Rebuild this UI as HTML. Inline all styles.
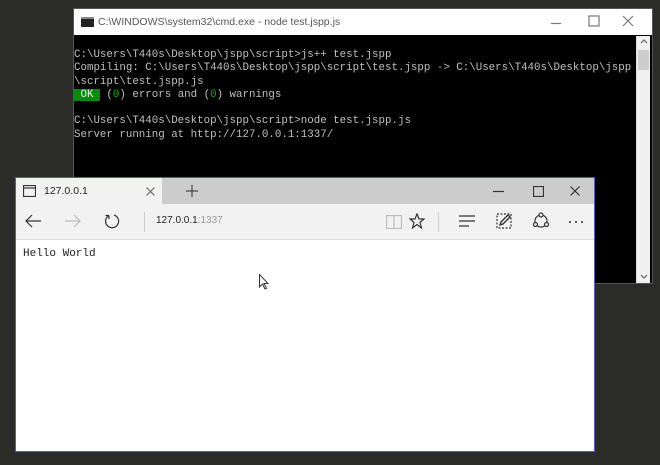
<!DOCTYPE html>
<html><head><style>
*{margin:0;padding:0;box-sizing:border-box}
body{width:660px;height:465px;background:#2b2b27;position:relative;overflow:hidden;font-family:"Liberation Sans",sans-serif}
.cmd{position:absolute;left:73px;top:8px;width:580px;height:276px;background:#000;border:1px solid #555}
.cmd .tb{height:26px;background:#fff;position:relative;font-size:10.5px;color:#555}
.cmd .tb .t{position:absolute;left:24px;top:7px}
.cmd .ic{position:absolute;left:7px;top:8px;width:13px;height:10px;background:#222;border-top:2px solid #888}
.con{position:absolute;left:0;top:40px;font-family:"Liberation Mono",monospace;font-size:10.8px;line-height:13.3px;color:#c0c0c0;white-space:pre}
.ok{background:#0a8a0a;color:#eee}
.g{color:#0b0}
.sb{position:absolute;right:2px;top:27px;width:14px;height:247px;background:#f0f0f0;border-left:1px solid #ddd}
.br{position:absolute;left:15px;top:177px;width:580px;height:275px;background:#fff;border:1px solid #5b5bb5}
.tabs{height:26px;background:#cccccc;position:relative}
.tab{position:absolute;left:0;top:0;width:146px;height:26px;background:#f2f2f2;font-size:10.5px;color:#222}
.tool{height:36px;background:#f2f2f2;border-bottom:1px solid #ddd;position:relative}
svg{position:absolute;fill:none;stroke:#333;stroke-width:1.2}
.hw{position:absolute;left:7px;top:70px;font-family:"Liberation Mono","Courier New",monospace;font-size:11px;color:#222}
</style></head><body>
<div class="cmd">
 <div class="tb"><div class="ic"></div><span class="t">C:\WINDOWS\system32\cmd.exe - node  test.jspp.js</span>
 <svg style="left:476px;top:8px" width="12" height="12" viewBox="0 0 12 12"><path d="M1 6.5H11" stroke="#777"/></svg>
 <svg style="left:514px;top:6px" width="12" height="12" viewBox="0 0 12 12"><rect x="1" y="1" width="10" height="10" stroke="#777"/></svg>
 <svg style="left:548px;top:6px" width="12" height="12" viewBox="0 0 12 12"><path d="M1 1L11 11M11 1L1 11" stroke="#777"/></svg></div>
 <div class="sb"><svg style="left:3px;top:2px" width="8" height="6" viewBox="0 0 8 6"><path d="M1 5L4 2L7 5" stroke="#666"/></svg><div style="position:absolute;top:14px;left:1px;width:11px;height:20px;background:#cdcdcd"></div><svg style="left:3px;bottom:3px" width="8" height="6" viewBox="0 0 8 6"><path d="M1 1L4 4L7 1" stroke="#666"/></svg></div>
<div class="con">C:\Users\T440s\Desktop\jspp\script&gt;js++ test.jspp
Compiling: C:\Users\T440s\Desktop\jspp\script\test.jspp -&gt; C:\Users\T440s\Desktop\jspp
\script\test.jspp.js
<span class="ok"> OK </span> (<span class="g">0</span>) errors and (<span class="g">0</span>) warnings

C:\Users\T440s\Desktop\jspp\script&gt;node test.jspp.js
Server running at http://127.0.0.1:1337/</div>
</div>
<div class="br">
 <div class="tabs">
  <div class="tab">
   <svg style="left:7px;top:7px" width="13" height="12" viewBox="0 0 13 12"><rect x="0.5" y="0.5" width="12" height="11"/><path d="M0.5 3H12.5"/></svg>
   <span style="position:absolute;left:28px;top:7px">127.0.0.1</span>
   <svg style="left:130px;top:9px" width="9" height="9" viewBox="0 0 9 9"><path d="M0.5 0.5L8.5 8.5M8.5 0.5L0.5 8.5" stroke="#666"/></svg></div>
  <svg style="left:170px;top:7px" width="12" height="12" viewBox="0 0 12 12"><path d="M6 0V12M0 6H12" stroke="#444"/></svg>
  <svg style="left:477px;top:7px" width="11" height="12" viewBox="0 0 11 12"><path d="M0 6.5H11"/></svg>
  <svg style="left:517px;top:8px" width="11" height="11" viewBox="0 0 11 11"><rect x="0.5" y="0.5" width="10" height="10"/></svg>
  <svg style="left:554px;top:8px" width="10" height="10" viewBox="0 0 10 10"><path d="M0.5 0.5L9.5 9.5M9.5 0.5L0.5 9.5"/></svg>
 </div>
 <div class="tool">
  <svg style="left:9px;top:10px" width="17" height="14" viewBox="0 0 17 14"><path d="M16 7H1M7 1L1 7L7 13"/></svg>
  <svg style="left:48px;top:10px" width="17" height="14" viewBox="0 0 17 14"><path d="M1 7H16M10 1L16 7L10 13" stroke="#bbb"/></svg>
  <svg style="left:88px;top:9px" width="16" height="16" viewBox="0 0 16 16"><path d="M5 2.5A6.5 6.5 0 1 0 10 2M5 2.5L5 6M5 2.5L1.5 2.5"/></svg>
  <span style="position:absolute;left:128px;top:8px;width:1px;height:20px;background:#ccc"></span>
  <span style="position:absolute;left:140px;top:11px;font-size:10px;color:#222">127.0.0.1<span style="color:#999">:1337</span></span>
  <svg style="left:370px;top:11px" width="16" height="14" viewBox="0 0 16 14"><rect x="0.5" y="0.5" width="15" height="13" stroke="#bbb"/><path d="M8 0.5V13.5" stroke="#bbb"/></svg>
  <svg style="left:393px;top:9px" width="16" height="16" viewBox="0 0 16 16"><path d="M8 1L10 6H15L11 9.5L12.5 15L8 11.5L3.5 15L5 9.5L1 6H6Z"/></svg>
  <span style="position:absolute;left:422px;top:8px;width:1px;height:20px;background:#ccc"></span>
  <svg style="left:443px;top:11px" width="16" height="12" viewBox="0 0 16 12"><path d="M0 1H16M0 6H16M0 11H10"/></svg>
  <svg style="left:480px;top:9px" width="16" height="16" viewBox="0 0 16 16"><rect x="1" y="1" width="14" height="14" stroke-dasharray="2 1.5"/><path d="M4 12L5 9L12 2L14 4L7 11Z" stroke-width="1.4"/></svg>
  <svg style="left:516px;top:8px" width="18" height="18" viewBox="0 0 18 18"><circle cx="9" cy="9" r="6"/><circle cx="9" cy="3" r="2" fill="#f2f2f2"/><circle cx="3.5" cy="12.5" r="2" fill="#f2f2f2"/><circle cx="14.5" cy="12.5" r="2" fill="#f2f2f2"/></svg>
  <svg style="left:552px;top:16px" width="16" height="4" viewBox="0 0 16 4"><circle cx="2" cy="2" r="1" fill="#333" stroke="none"/><circle cx="8" cy="2" r="1" fill="#333" stroke="none"/><circle cx="14" cy="2" r="1" fill="#333" stroke="none"/></svg>
 </div>
 <div class="hw">Hello World</div>
 <svg style="left:243px;top:96px" width="10" height="16" viewBox="0 0 10 16"><path d="M0.5 0.5V13L3.5 10L6 15L7.5 14.3L5 9.5H9Z" fill="#fff" stroke="#333" stroke-width="1"/></svg>
</div>
</body></html>
